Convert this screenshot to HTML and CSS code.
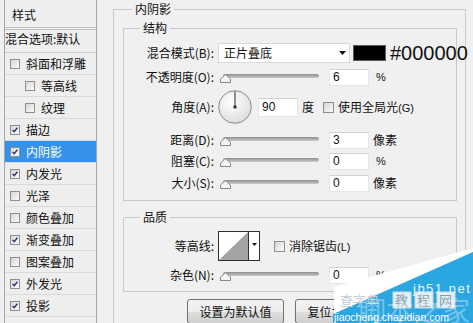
FILE: index.html
```html
<!DOCTYPE html>
<html>
<head>
<meta charset="utf-8">
<link rel="stylesheet" href="styles.css">
</head>
<body>
<div class="dlg">
  <aside class="styles">
    <div class="st-head">样式</div>
    <div class="st-blend">混合选项:默认</div>
    <div class="item"><span class="cb"></span>斜面和浮雕</div>
    <div class="item sub"><span class="cb"></span>等高线</div>
    <div class="item sub"><span class="cb"></span>纹理</div>
    <div class="item"><span class="cb"><svg viewBox="0 0 10 10"><path d="M2 4.8l2 2.4 4-5"/></svg></span>描边</div>
    <div class="item sel"><span class="cb"><svg viewBox="0 0 10 10"><path d="M2 4.8l2 2.4 4-5"/></svg></span>内阴影</div>
    <div class="item"><span class="cb"><svg viewBox="0 0 10 10"><path d="M2 4.8l2 2.4 4-5"/></svg></span>内发光</div>
    <div class="item"><span class="cb"></span>光泽</div>
    <div class="item"><span class="cb"></span>颜色叠加</div>
    <div class="item"><span class="cb"><svg viewBox="0 0 10 10"><path d="M2 4.8l2 2.4 4-5"/></svg></span>渐变叠加</div>
    <div class="item"><span class="cb"></span>图案叠加</div>
    <div class="item"><span class="cb"><svg viewBox="0 0 10 10"><path d="M2 4.8l2 2.4 4-5"/></svg></span>外发光</div>
    <div class="item"><span class="cb"><svg viewBox="0 0 10 10"><path d="M2 4.8l2 2.4 4-5"/></svg></span>投影</div>
  </aside>

  <main class="main">
    <fieldset class="grp outer">
      <legend class="lg-outer">内阴影</legend>

      <fieldset class="grp inner struct">
        <legend class="lg-inner">结构</legend>
        <div class="row r-blend">
          <span class="lbl">混合模式(B):</span>
          <div class="select"><span>正片叠底</span><svg class="dd" viewBox="0 0 7 4"><path d="M0 0h7L3.5 4z"/></svg></div>
          <span class="swatch"></span>
          <span class="hex">#000000</span>
        </div>
        <div class="row r-opacity">
          <span class="lbl">不透明度(O):</span>
          <div class="slider"><span class="track"></span><svg class="thumb" viewBox="0 0 11 9"><path d="M5.5 .5L10.5 5V8.5H.5V5z"/></svg></div>
          <span class="num">6</span><span class="unit pct">%</span>
        </div>
        <div class="row r-angle">
          <span class="lbl">角度(A):</span>
          <svg class="dial" viewBox="0 0 34 34">
            <defs><radialGradient id="dg" cx="40%" cy="35%" r="70%"><stop offset="0" stop-color="#ffffff"/><stop offset="1" stop-color="#dcdcdc"/></radialGradient></defs>
            <circle cx="17" cy="17" r="16.3" fill="url(#dg)" stroke="#8a8a8a"/>
            <line x1="17" y1="17" x2="17" y2="1.5" stroke="#4a4a4a" stroke-width="1.2"/>
            <circle cx="17" cy="17" r="1.8" fill="#3a3a3a"/>
          </svg>
          <span class="num ang">90</span><span class="unit">度</span>
          <span class="cb gl"></span><span class="cbl">使用全局光<span class="lat">(G)</span></span>
        </div>
        <div class="row r-dist">
          <span class="lbl">距离(D):</span>
          <div class="slider"><span class="track"></span><svg class="thumb" viewBox="0 0 11 9"><path d="M5.5 .5L10.5 5V8.5H.5V5z"/></svg></div>
          <span class="num">3</span><span class="unit">像素</span>
        </div>
        <div class="row r-choke">
          <span class="lbl">阻塞(C):</span>
          <div class="slider"><span class="track"></span><svg class="thumb" viewBox="0 0 11 9"><path d="M5.5 .5L10.5 5V8.5H.5V5z"/></svg></div>
          <span class="num">0</span><span class="unit pct">%</span>
        </div>
        <div class="row r-size">
          <span class="lbl">大小(S):</span>
          <div class="slider"><span class="track"></span><svg class="thumb" viewBox="0 0 11 9"><path d="M5.5 .5L10.5 5V8.5H.5V5z"/></svg></div>
          <span class="num">0</span><span class="unit">像素</span>
        </div>
      </fieldset>

      <fieldset class="grp inner quality">
        <legend class="lg-inner">品质</legend>
        <div class="row r-contour">
          <span class="lbl">等高线:</span>
          <div class="contour">
            <svg class="cpreview" viewBox="0 0 29 28" preserveAspectRatio="none"><rect width="29" height="28" fill="#fff"/><path d="M0 28L29 0V28z" fill="#a3a3a3"/></svg>
            <span class="carrow"><svg class="dd" viewBox="0 0 7 4"><path d="M0 0h7L3.5 4z"/></svg></span>
          </div>
          <span class="cb aa"></span><span class="cbl">消除锯齿<span class="lat">(L)</span></span>
        </div>
        <div class="row r-noise">
          <span class="lbl">杂色(N):</span>
          <div class="slider"><span class="track"></span><svg class="thumb" viewBox="0 0 11 9"><path d="M5.5 .5L10.5 5V8.5H.5V5z"/></svg></div>
          <span class="num">0</span><span class="unit pct">%</span>
        </div>
      </fieldset>

      <div class="btns">
        <span class="btn">设置为默认值</span>
        <span class="btn">复位为默认值</span>
      </div>
    </fieldset>
  </main>

  <svg class="watermark" viewBox="0 0 140 75">
    <path d="M1 39L140 0V4L5 64L1 66z" fill="#ffffff"/>
    <path d="M140 4V75H0V66L5 64z" fill="#2aa6e1"/>
    <text x="7" y="57" class="wm-cz">查字典</text>
    <rect x="60" y="44" width="18" height="16" class="wm-box"/>
    <rect x="82" y="44" width="18" height="16" class="wm-box"/>
    <rect x="104" y="44" width="18" height="16" class="wm-box"/>
    <text x="62" y="57" class="wm-jc">教</text>
    <text x="84" y="57" class="wm-jc">程</text>
    <text x="106" y="57" class="wm-jc">网</text>
    <text x="80" y="45" class="wm-jb">jb51.net</text>
    <text x="25" y="74" class="wm-big">脚本之家</text>
    <text x="1" y="73" class="wm-url">jiaocheng.chazidian.com</text>
  </svg>
</div>
</body>
</html>
```

FILE: styles.css
```css
* { box-sizing: border-box; }
html, body { margin: 0; padding: 0; }
body {
  width: 473px;
  height: 323px;
  overflow: hidden;
  background: #f0f0f0;
  font-family: "Noto Sans CJK SC", "Noto Sans", sans-serif;
  font-size: 12px;
  line-height: 16px;
  color: #111;
}
.dlg {
  position: relative;
  display: flex;
  height: 323px;
  overflow: hidden;
}

/* left style list */
.styles {
  flex: none;
  margin-left: 4px;
  width: 93px;
  height: 323px;
  background: #eeeeee;
  border-left: 1px solid #a6a6a6;
  border-right: 1px solid #a6a6a6;
}
.st-head {
  height: 30px;
  padding: 3px 0 0 7px;
  display: flex;
  align-items: center;
  border-bottom: 3px double #c2c2c2;
}
.st-blend {
  height: 23px;
  padding-bottom: 5px;
  display: flex;
  align-items: center;
  border-bottom: 1px solid #d2d2d2;
}
.item {
  height: 22px;
  display: flex;
  align-items: center;
  gap: 6px;
  padding-left: 5px;
  border-bottom: 1px solid #dadada;
}
.item.sub { padding-left: 20px; }
.item.sel { background: #3592ea; color: #fff; }

.cb {
  flex: none;
  width: 10px;
  height: 10px;
  border: 1px solid #8e9090;
  background: linear-gradient(135deg, #d6d6d6, #fbfbfb);
  display: flex;
}
.cb svg { width: 8px; height: 8px; }
.cb path { fill: none; stroke: #25346c; stroke-width: 1.7; }

/* right settings */
.main {
  flex: 1;
  padding-left: 16px;
}
.grp {
  margin: 0;
  padding: 0;
  min-width: 0;
  border: 1px solid #c9c9c9;
}
.grp legend {
  padding: 0 3px;
  font-size: 12px;
}
.outer {
  width: 353px;
  height: 323px;
  border-bottom-width: 0;
}
.lg-outer { margin-left: 18px; line-height: 18px; }
.lg-inner { margin-left: 16px; line-height: 16px; }
.inner { margin-left: 9px; width: 334px; }
.struct { margin-top: 2px; padding-bottom: 7px; }
.quality { margin-top: 8px; padding-bottom: 6px; }

.row { display: flex; align-items: center; }
.lbl {
  flex: none;
  width: 90px;
  margin-right: 4px;
  text-align: right;
  white-space: nowrap;
}
.r-blend { margin-top: 7px; height: 20px; }
.r-opacity { margin-top: 3px; height: 22px; }
.r-angle { margin-top: 2px; height: 34px; }
.r-dist { margin-top: 6px; height: 20px; }
.r-choke { margin-top: 1px; height: 20px; }
.r-size { margin-top: 2px; height: 20px; }
.r-contour { margin-top: 6px; height: 30px; }
.r-noise { margin-top: 4px; height: 20px; }

.select {
  flex: none;
  width: 132px;
  height: 20px;
  background: #fff;
  border: 1px solid #dadada;
  display: flex;
  align-items: center;
  justify-content: space-between;
  padding: 0 3px 0 5px;
}
.dd { width: 7px; height: 4px; }
.dd path { fill: #111; }
.swatch {
  flex: none;
  margin-left: 3px;
  width: 33px;
  height: 16px;
  background: #000;
  border: 1px solid #5a5a5a;
}
.hex {
  margin-left: 4px;
  font-family: "Liberation Sans", Arial, sans-serif;
  font-size: 20px;
  line-height: 20px;
  color: #111;
  white-space: nowrap;
}

.slider {
  flex: none;
  position: relative;
  width: 101px;
  height: 20px;
}
.track {
  position: absolute;
  left: 5px;
  right: 0;
  top: 7px;
  height: 4px;
  border-radius: 2px;
  background: linear-gradient(#8f8f8f, #c9c9c9);
}
.thumb {
  position: absolute;
  left: 2px;
  top: 7px;
  width: 11px;
  height: 9px;
}
.thumb path { fill: #f4f4f4; stroke: #878787; stroke-width: 1; }

.num {
  flex: none;
  margin-left: 10px;
  width: 40px;
  height: 17px;
  background: #fff;
  border: 1px solid #e6e6e6;
  border-top-color: #d2d2d2;
  padding-left: 3px;
  font-family: "Liberation Sans", Arial, sans-serif;
  font-size: 12px;
  line-height: 15px;
}
.num.ang { margin-left: 6px; height: 19px; line-height: 17px; }
.unit { margin-left: 4px; white-space: nowrap; }
.unit.pct { margin-left: 7px; font-family: "Liberation Sans", Arial, sans-serif; font-size: 11px; }

.dial { flex: none; width: 34px; height: 34px; }

.cb.gl, .cb.aa { width: 11px; height: 11px; }
.cb.gl { margin-left: 9px; }
.cb.aa { margin-left: 14px; }
.cbl { margin-left: 4px; white-space: nowrap; }
.lat { font-family: "Liberation Sans", Arial, sans-serif; font-size: 11px; }

.contour {
  flex: none;
  width: 42px;
  height: 30px;
  border: 1px solid #2f2f2f;
  display: flex;
  background: #fff;
}
.cpreview { width: 29px; height: 28px; display: block; }
.carrow {
  flex: 1;
  border-left: 1px solid #2f2f2f;
  display: flex;
  align-items: center;
  justify-content: center;
  padding-bottom: 3px;
}
.carrow .dd { width: 5px; height: 3px; }

.btns {
  display: flex;
  gap: 11px;
  margin: 7px 0 0 73px;
}
.btn {
  flex: none;
  width: 97px;
  height: 25px;
  border: 1px solid #707070;
  border-radius: 3px;
  background: linear-gradient(#f3f3f3, #ececec 50%, #dedede 51%, #d0d0d0);
  display: flex;
  align-items: center;
  justify-content: center;
}

/* watermark overlay */
.watermark {
  position: absolute;
  right: 0;
  bottom: 0;
  width: 140px;
  height: 75px;
}
.wm-cz { font-family: "Noto Sans CJK SC", sans-serif; font-size: 13px; fill: #c4ccd4; }
.wm-box { fill: #ffffff; fill-opacity: 0.85; stroke: #d0d6dc; }
.wm-jc { font-family: "Noto Sans CJK SC", sans-serif; font-size: 13px; fill: #8d9aa6; }
.wm-jb { font-family: "Liberation Sans", sans-serif; font-size: 13px; letter-spacing: 1.5px; fill: #e9f6fd; }
.wm-big { font-family: "Noto Sans CJK SC", sans-serif; font-size: 28px; fill: #ffffff; fill-opacity: 0.35; }
.wm-url { font-family: "Liberation Sans", sans-serif; font-size: 10.5px; fill: #ffffff; }
```
